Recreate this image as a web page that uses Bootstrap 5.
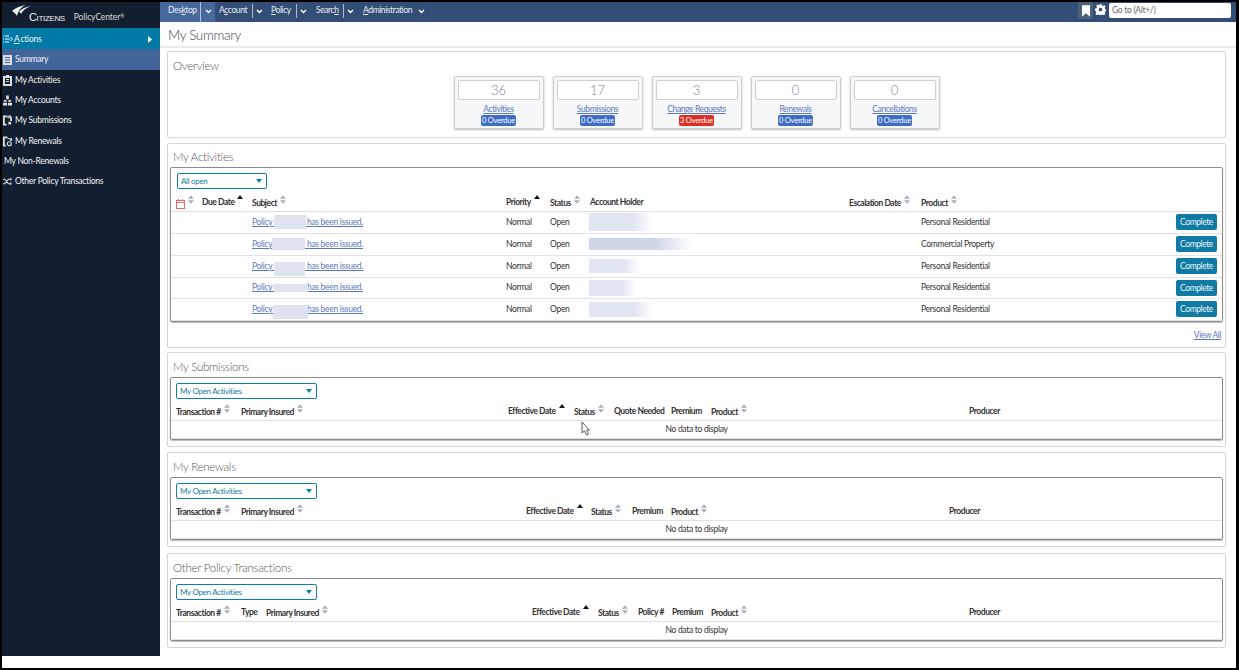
<!DOCTYPE html>
<html lang="en"><head><meta charset="utf-8"><title>My Summary</title>
<link href="https://cdn.jsdelivr.net/npm/bootstrap@5.3.0/dist/css/bootstrap.min.css" rel="stylesheet">
<style>
html,body{height:100%;margin:0;overflow:hidden;background:#000}
body{font-family:"Lato","Liberation Sans",sans-serif;font-size:8.5px;color:#222;letter-spacing:-.3px}
.frame{margin:2px 3px 2px 2px;height:666px;background:#fff;display:flex;overflow:hidden}
.leftc{width:158px;height:654px;flex:none;background:#131f30;color:#eef0f4;display:flex;flex-direction:column}
.brand{height:26px;display:flex;align-items:flex-start;flex:none;color:#ddd;padding-left:9px}
.brand svg{flex:none;margin:2px -3px 0 0}
.cz{font-family:"Liberation Sans",sans-serif;font-size:11px;line-height:12px;color:#eee;font-variant:small-caps;letter-spacing:-.35px;margin-top:9px}
.pc{font-size:8.500px;line-height:12px;margin-left:9px;margin-top:9px;color:#d8d8d8;letter-spacing:-.1px}
.pc sup{font-size:5px}
.side-item{height:20.300px;display:flex;align-items:center;padding-left:1px;gap:3px;white-space:nowrap;letter-spacing:-.25px;color:#f2f4f8}
.side-plain{padding-left:2px}
.side-actions{background:#0079a4;height:21px;justify-content:space-between;padding-right:8px;padding-top:1px}
.side-actions span{display:flex;align-items:center;gap:1px}
.side-sum{background:#41649b;height:21px}
.rightc{flex:1;min-width:0;display:flex;flex-direction:column}
.top{height:20px;display:flex;background:#324d76;flex:none;align-items:flex-start}
.tab{color:#e8edf5;line-height:17px;height:20px;white-space:nowrap;letter-spacing:-.4px;flex:none}
.t-desk{width:41px;padding-left:8px;background:#46689b;border-right:1px solid #b8c4d6}
.t-acc{width:37px;padding-left:4px}
.t-pol{width:31px;padding-left:6px}
.t-sea{width:34px;padding-left:7px}
.t-adm{width:59px;padding-left:7px}
.caret-box{width:12px;display:flex;align-items:center;justify-content:center;height:18px;flex:none}
.caret-act{background:#46689b;width:14px;height:20px;padding-bottom:2px}
.sep{width:1px;height:14px;background:#aebacd;margin-top:2px;flex:none}
.navright{margin-left:auto;display:flex;align-items:flex-start;padding-right:5px}
.goto{width:122px;height:15px;background:#fff;border-radius:2px;color:#666;padding-left:3px;line-height:15px;margin-left:3px;margin-top:1px}
.bm{width:15px;height:17px;background:#4c5f7d;display:flex;align-items:center;justify-content:center}
.gear{margin:2px 0 0 2px}
.ttl{height:26px;font-size:13.500px;letter-spacing:-.35px;color:#444;padding-left:8px;line-height:27px;border-bottom:2px solid #e9e9e9;font-weight:300;flex:none}
.panel{border:1px solid #d4d4d4;border-radius:2px;margin:0 10px 0 7px;padding:0 2px;background:#fff;flex:none}
.p-over{height:87px;margin-top:3px}
.p-act{height:205px;margin-top:5px}
.p-sub{height:95px;margin-top:4px}
.p-ren{height:95px;margin-top:5px}
.p-oth{height:95px;margin-top:6px}
.ptitle{font-size:11.500px;letter-spacing:-.25px;color:#555;padding:7px 0 0 3px;line-height:14px;font-weight:300}
.p-act .ptitle{padding-top:6px}
.p-act .inner{margin-top:3px}
.tiles{display:flex;justify-content:center;gap:9px;margin-top:3px}
.tile{width:90px;height:53px;border:1px solid #cfcfcf;border-radius:2px;background:#f6f7f9;box-shadow:0 1px 2px #bbb;text-align:center;padding:3px 3px 0}
.tile-num{height:20px;border:1px solid #cfcfcf;border-radius:2px;background:#fff;font-size:13px;color:#7c8799;line-height:18px;font-weight:300;letter-spacing:0}
.tile-lnk{color:#5b78c0;text-decoration:underline;letter-spacing:-.4px;line-height:12px;display:block;margin-top:3px}
.od{display:block;width:35px;margin:0 auto;height:11px;line-height:11px;color:#fff;background:#3f6cc4;border-radius:2px;font-size:7.500px;letter-spacing:-.2px;white-space:nowrap}
.od-red{background:#dd2f23}
.inner{border:1px solid #8b8b8b;border-radius:2px;box-shadow:0 1px 1px #bbb;margin-top:3px;position:relative}
.pick{display:flex;justify-content:space-between;align-items:center;height:16px;border:1px solid #0f7ea6;border-radius:2px;color:#167d9f;font-size:8px;padding:0 4px 0 3px;margin:5px 0 0 5px}
.w90{width:90px;margin-left:6px}.w141{width:141px}
.gtable{width:100%;table-layout:fixed;border-collapse:collapse}
.gtable th{font-weight:700;color:#333;letter-spacing:-.45px;height:21px;vertical-align:middle;padding:4px 0 0;white-space:nowrap;border-bottom:1px solid #dde1e6}
.gtable th:first-child{padding-left:5px}
.gtable td{color:#333;height:22px;vertical-align:middle;padding:0;white-space:nowrap;border-bottom:1px solid #e0e3e8}
.t-a{margin-top:1px}
.t-a tr:nth-child(4) td{height:21px}
.t-a col:nth-child(1){width:31px}.t-a col:nth-child(2){width:50px}.t-a col:nth-child(3){width:254px}.t-a col:nth-child(4){width:44px}.t-a col:nth-child(5){width:40px}.t-a col:nth-child(6){width:259px}.t-a col:nth-child(7){width:72px}.t-a col:nth-child(8){width:240px}
.t-s col:nth-child(1){width:70px}.t-s col:nth-child(2){width:267px}.t-s col:nth-child(3){width:66px}.t-s col:nth-child(4){width:40px}.t-s col:nth-child(5){width:57px}.t-s col:nth-child(6){width:40px}.t-s col:nth-child(7){width:258px}
.t-r col:nth-child(1){width:70px}.t-r col:nth-child(2){width:285px}.t-r col:nth-child(3){width:65px}.t-r col:nth-child(4){width:41px}.t-r col:nth-child(5){width:39px}.t-r col:nth-child(6){width:278px}
.t-o col:nth-child(1){width:70px}.t-o col:nth-child(2){width:25px}.t-o col:nth-child(3){width:266px}.t-o col:nth-child(4){width:66px}.t-o col:nth-child(5){width:40px}.t-o col:nth-child(6){width:34px}.t-o col:nth-child(7){width:39px}.t-o col:nth-child(8){width:258px}
.gtable td.nodata{height:18px;text-align:center}
.lk{color:#5b78c0;text-decoration:underline;position:relative;display:inline-block}
.gapx{display:inline-block;width:31px}
.blr{position:absolute;background:#dfe3f0;filter:blur(.4px)}
.b1{left:22px;width:32px;top:-1px;height:14px}
.b2{left:20px;width:33px;top:0;height:12px}
.b3{left:22px;width:31px;top:2px;height:14px}
.b4{left:22px;width:34px;top:2.500px;height:8px}
.b5{left:21px;width:35px;top:2.500px;height:14px}
.acct{display:block;margin-left:-1px;background:linear-gradient(90deg,#e2e6f2 70%,#fff)}
.a1{width:64px;height:18px}.a2{width:103px;height:12px;background:linear-gradient(90deg,#cfd6e8 65%,#fff)}.a3{width:51px;height:14px}.a4{width:47px;height:16px}.a5{width:64px;height:15px}
.srt{width:6px;height:9px;vertical-align:2px;margin-left:3px;fill:#a9b0ba}
.up{display:inline-block;width:0;height:0;border:3.500px solid transparent;border-bottom:4px solid #111;border-top:0;vertical-align:6px;margin-left:3px}
.cbtn{background:#0f7aa3;color:#eaf4f8;border:0;border-radius:2px;font-size:8.500px;letter-spacing:-.4px;height:16px;width:41px;line-height:16px;padding:0;display:block;margin-left:auto;margin-right:5px}
.cbtn:hover{background:#0f7aa3;color:#eaf4f8}
.viewall{text-align:right;padding:7px 2px 0 0;letter-spacing:-.4px}
.viewall a{color:#5b78c0}
.cursor{position:absolute;left:410px;top:43px}
</style></head>
<body>
<svg width="0" height="0" class="d-none"><symbol id="srt" viewBox="0 0 7 10"><path d="M3.500 0 7 4H0ZM0 6h7l-3.500 4Z"/></symbol><symbol id="car" viewBox="0 0 7 5"><path d="M1 1l2.500 2.500L6 1" fill="none" stroke="#fff" stroke-width="1.400"/></symbol><symbol id="pk" viewBox="0 0 6 4"><path d="M0 0h6L3 4Z" fill="#0f7ea6"/></symbol></svg>
<div class="frame">
 <div class="leftc">
  <div class="brand">
   <svg width="21" height="13" viewBox="0 0 21 13" fill="#f2f2f2"><path d="M1 7C4 4 9 2 15 1 10 3 7 7 6 12 5 10 3 8 1 7Z"/><path d="M8 8C10 5 14 3 20 2 15 4 12 6 10 10 10 9 9 8 8 8Z"/></svg>
   <span class="cz">Citizens</span><span class="pc">PolicyCenter<sup>®</sup></span>
  </div>
  <div class="side-item side-actions"><span><svg width="10" height="8" viewBox="0 0 10 8" fill="none" stroke="#fff"><path d="M0 1h1M2 1h4M0 4h1M2 4h5M0 7h1M2 7h4M7.500 2 9.500 4l-2 2"/></svg><u>A</u>ctions</span><svg width="4" height="7" viewBox="0 0 4 7"><path d="M0 0l4 3.500L0 7Z" fill="#fff"/></svg></div>
  <div class="side-item side-sum"><svg width="9" height="10" viewBox="0 0 9 10"><path fill="#ddd" fill-rule="evenodd" d="M0 0h9v10H0ZM2 2v1h5V2Zm0 2.500v1h5v-1ZM2 7v1h5V7Z"/></svg>Summary</div>
  <div class="side-item"><svg width="9" height="11" viewBox="0 0 9 11"><path fill="#ddd" fill-rule="evenodd" d="M3 0h3v1h3v10H0V1h3ZM2 3v6h5V3Z"/><path fill="#ddd" d="M3 4h3v1H3Zm0 2h3v1H3Z"/></svg>My Activities</div>
  <div class="side-item"><svg width="9" height="11" viewBox="0 0 10 11"><path fill="#ddd" d="M3.500 0h3v4h-3ZM1 5h3v2H1Zm5 0h3v2H6ZM0 8h4.500v3H0Zm5.500 0H10v3H5.500Z"/></svg>My Accounts</div>
  <div class="side-item"><svg width="9" height="11" viewBox="0 0 10 11"><path fill="#ddd" fill-rule="evenodd" d="M0 0h5v2h5v4H8V3H5V2H2v7h2v2H0Z"/><path fill="#ddd" d="M6 7h3v3H6ZM6 0h3v2H6Z"/></svg>My Submissions</div>
  <div class="side-item"><svg width="9" height="11" viewBox="0 0 10 11"><path fill="#ddd" fill-rule="evenodd" d="M0 0h5v2h5v3H8V3H5V2H2v7h1v2H0Z"/><circle cx="7" cy="8" r="2.200" fill="none" stroke="#ddd" stroke-width="1.300"/></svg>My Renewals</div>
  <div class="side-item side-plain">My Non-Renewals</div>
  <div class="side-item"><svg width="9" height="9" viewBox="0 0 10 9" fill="none" stroke="#ddd" stroke-width="1.300"><path d="M0 2h2l4 5h2M0 7h2l4-5h2"/><path d="M8 0l2 2-2 2ZM8 5l2 2-2 2Z" fill="#ddd" stroke="none"/></svg>Other Policy Transactions</div>
 </div>
 <div class="rightc">
  <div class="top">
   <div class="tab t-desk">Des<u>k</u>top</div>
   <div class="caret-box caret-act"><svg width="7" height="5"><use href="#car"/></svg></div>
   <div class="tab t-acc">A<u>c</u>count</div><div class="sep"></div>
   <div class="caret-box"><svg width="7" height="5"><use href="#car"/></svg></div>
   <div class="tab t-pol"><u>P</u>olicy</div><div class="sep"></div>
   <div class="caret-box"><svg width="7" height="5"><use href="#car"/></svg></div>
   <div class="tab t-sea">Searc<u>h</u></div><div class="sep"></div>
   <div class="caret-box"><svg width="7" height="5"><use href="#car"/></svg></div>
   <div class="tab t-adm"><u>A</u>dministration</div>
   <div class="caret-box"><svg width="7" height="5"><use href="#car"/></svg></div>
   <div class="navright">
    <div class="bm"><svg width="8" height="12" viewBox="0 0 9 13"><path d="M0 0h9v13L4.500 9 0 13Z" fill="#fff"/></svg></div>
    <svg class="gear" width="11" height="11" viewBox="0 0 16 16"><path fill="#fff" fill-rule="evenodd" d="M6.500 0h3l.4 2.100 1.500.7 1.900-1.200 2 2.100-1.200 1.800.7 1.600 2.200.4v3l-2.200.4-.7 1.600 1.200 1.800-2 2.100-1.900-1.200-1.500.7-.4 2.100h-3l-.4-2.100-1.500-.7-1.900 1.200-2-2.100 1.200-1.800-.7-1.600L0 9.500v-3l2.200-.4.7-1.600L1.700 2.700l2-2.100 1.900 1.200 1.500-.7ZM8 5.300a2.700 2.700 0 1 0 0 5.400 2.700 2.700 0 0 0 0-5.400Z"/></svg>
    <div class="goto">Go to (Alt+/)</div>
   </div>
  </div>
  <div class="ttl">My Summary</div>
  <section class="panel p-over">
   <div class="ptitle">Overview</div>
   <div class="tiles">
    <div class="tile"><div class="tile-num">36</div><a class="tile-lnk">Activities</a><span class="od">0 Overdue</span></div>
    <div class="tile"><div class="tile-num">17</div><a class="tile-lnk">Submissions</a><span class="od">0 Overdue</span></div>
    <div class="tile"><div class="tile-num">3</div><a class="tile-lnk">Change Requests</a><span class="od od-red">3 Overdue</span></div>
    <div class="tile"><div class="tile-num">0</div><a class="tile-lnk">Renewals</a><span class="od">0 Overdue</span></div>
    <div class="tile"><div class="tile-num">0</div><a class="tile-lnk">Cancellations</a><span class="od">0 Overdue</span></div>
   </div>
  </section>
  <section class="panel p-act">
   <div class="ptitle">My Activities</div>
   <div class="inner">
    <div class="pick w90"><span>All open</span><svg width="6" height="4"><use href="#pk"/></svg></div>
    <table class="gtable t-a">
     <colgroup><col><col><col><col><col><col><col><col><col></colgroup>
     <thead><tr><th><svg width="9" height="10" viewBox="0 0 9 10" fill="none" stroke="#e8686c"><rect x=".5" y="1.500" width="8" height="8"/><path d="M0 3.500h9M2.500 0v2M6.500 0v2"/></svg><svg class="srt"><use href="#srt"/></svg></th>
      <th>Due Date<i class="up"></i></th><th>Subject<svg class="srt"><use href="#srt"/></svg></th>
      <th>Priority<i class="up"></i></th><th>Status<svg class="srt"><use href="#srt"/></svg></th>
      <th>Account Holder</th><th>Escalation Date<svg class="srt"><use href="#srt"/></svg></th>
      <th>Product<svg class="srt"><use href="#srt"/></svg></th><th></th></tr></thead>
     <tbody>
      <tr><td></td><td></td><td><a class="lk">Policy <span class="gapx"></span> has been issued.<span class="blr b1"></span></a></td><td>Normal</td><td>Open</td><td><span class="acct a1"></span></td><td></td><td>Personal Residential</td><td><button class="btn cbtn">Complete</button></td></tr>
      <tr><td></td><td></td><td><a class="lk">Policy <span class="gapx"></span> has been issued.<span class="blr b2"></span></a></td><td>Normal</td><td>Open</td><td><span class="acct a2"></span></td><td></td><td>Commercial Property</td><td><button class="btn cbtn">Complete</button></td></tr>
      <tr><td></td><td></td><td><a class="lk">Policy <span class="gapx"></span> has been issued.<span class="blr b3"></span></a></td><td>Normal</td><td>Open</td><td><span class="acct a3"></span></td><td></td><td>Personal Residential</td><td><button class="btn cbtn">Complete</button></td></tr>
      <tr><td></td><td></td><td><a class="lk">Policy <span class="gapx"></span> has been issued.<span class="blr b4"></span></a></td><td>Normal</td><td>Open</td><td><span class="acct a4"></span></td><td></td><td>Personal Residential</td><td><button class="btn cbtn">Complete</button></td></tr>
      <tr><td></td><td></td><td><a class="lk">Policy <span class="gapx"></span> has been issued.<span class="blr b5"></span></a></td><td>Normal</td><td>Open</td><td><span class="acct a5"></span></td><td></td><td>Personal Residential</td><td><button class="btn cbtn">Complete</button></td></tr>
     </tbody>
    </table>
   </div>
   <div class="viewall"><a href="#">View All</a></div>
  </section>
  <section class="panel p-sub">
   <div class="ptitle">My Submissions</div>
   <div class="inner">
    <div class="pick w141"><span>My Open Activities</span><svg width="6" height="4"><use href="#pk"/></svg></div>
    <table class="gtable t-s">
     <colgroup><col><col><col><col><col><col><col><col></colgroup>
     <thead><tr><th>Transaction #<svg class="srt"><use href="#srt"/></svg></th><th>Primary Insured<svg class="srt"><use href="#srt"/></svg></th><th>Effective Date<i class="up"></i></th><th>Status<svg class="srt"><use href="#srt"/></svg></th><th>Quote Needed</th><th>Premium</th><th>Product<svg class="srt"><use href="#srt"/></svg></th><th>Producer</th></tr></thead>
     <tbody><tr><td colspan="8" class="nodata">No data to display</td></tr></tbody>
    </table>
    <svg class="cursor" width="9" height="15" viewBox="0 0 9 15"><path d="M1 1v11l2.500-2.200L5.500 14l2-1-2-4H8.500Z" fill="#fff" stroke="#333" stroke-width=".8"/></svg>
   </div>
  </section>
  <section class="panel p-ren">
   <div class="ptitle">My Renewals</div>
   <div class="inner">
    <div class="pick w141"><span>My Open Activities</span><svg width="6" height="4"><use href="#pk"/></svg></div>
    <table class="gtable t-r">
     <colgroup><col><col><col><col><col><col><col></colgroup>
     <thead><tr><th>Transaction #<svg class="srt"><use href="#srt"/></svg></th><th>Primary Insured<svg class="srt"><use href="#srt"/></svg></th><th>Effective Date<i class="up"></i></th><th>Status<svg class="srt"><use href="#srt"/></svg></th><th>Premium</th><th>Product<svg class="srt"><use href="#srt"/></svg></th><th>Producer</th></tr></thead>
     <tbody><tr><td colspan="7" class="nodata">No data to display</td></tr></tbody>
    </table>
   </div>
  </section>
  <section class="panel p-oth">
   <div class="ptitle">Other Policy Transactions</div>
   <div class="inner">
    <div class="pick w141"><span>My Open Activities</span><svg width="6" height="4"><use href="#pk"/></svg></div>
    <table class="gtable t-o">
     <colgroup><col><col><col><col><col><col><col><col><col></colgroup>
     <thead><tr><th>Transaction #<svg class="srt"><use href="#srt"/></svg></th><th>Type</th><th>Primary Insured<svg class="srt"><use href="#srt"/></svg></th><th>Effective Date<i class="up"></i></th><th>Status<svg class="srt"><use href="#srt"/></svg></th><th>Policy #</th><th>Premium</th><th>Product<svg class="srt"><use href="#srt"/></svg></th><th>Producer</th></tr></thead>
     <tbody><tr><td colspan="9" class="nodata">No data to display</td></tr></tbody>
    </table>
   </div>
  </section>
 </div>
</div>
<script src="https://cdn.jsdelivr.net/npm/bootstrap@5.3.0/dist/js/bootstrap.bundle.min.js"></script>
</body></html>
